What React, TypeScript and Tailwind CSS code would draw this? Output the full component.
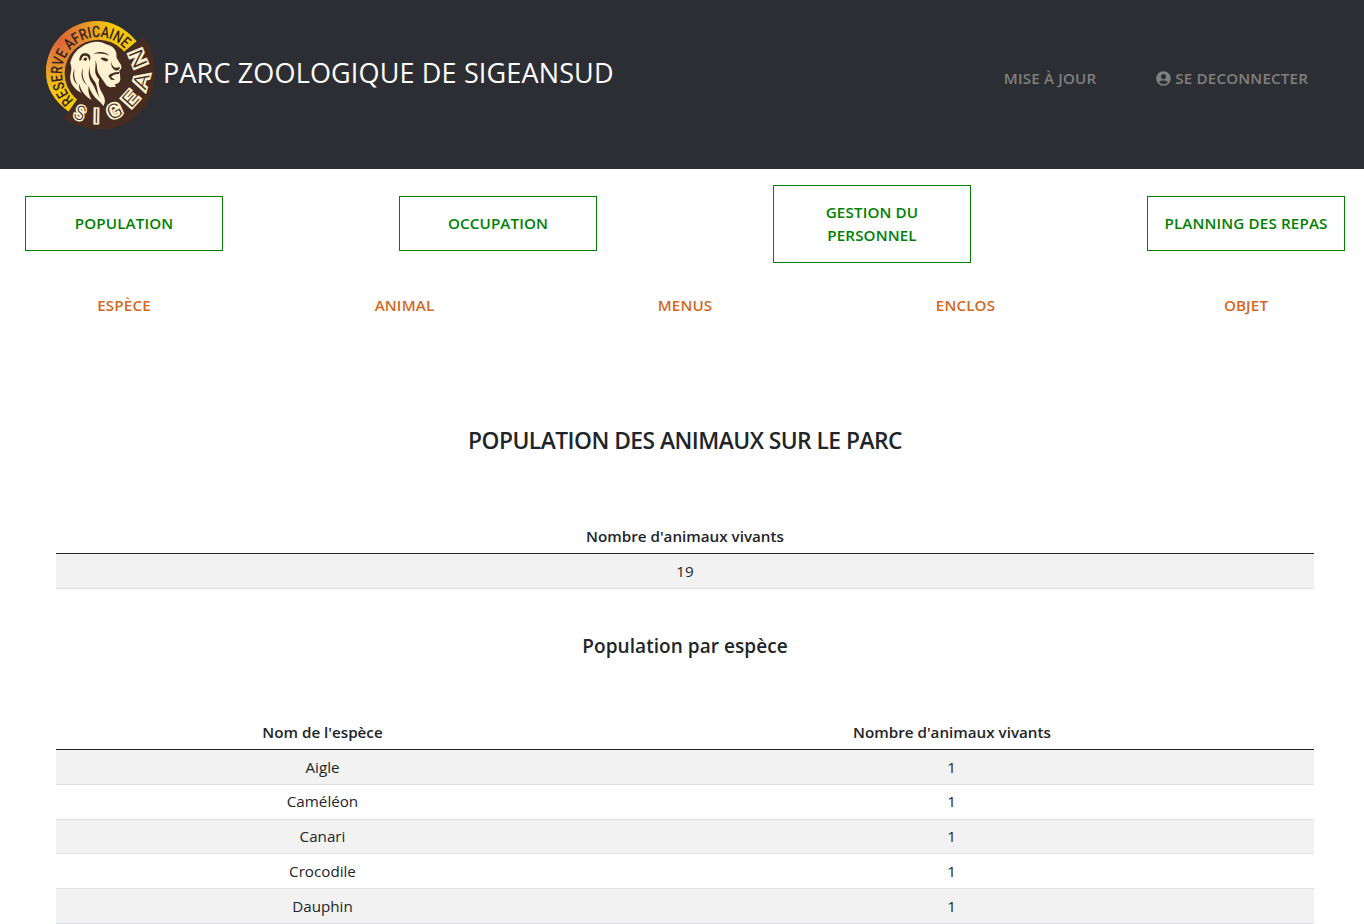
import React from "react";
import { FaUserCircle } from "react-icons/fa";

const sections = ["POPULATION", "OCCUPATION", "GESTION DU PERSONNEL", "PLANNING DES REPAS"];
const links = ["ESPÈCE", "ANIMAL", "MENUS", "ENCLOS", "OBJET"];
const species: [string, number][] = [
  ["Aigle", 1],
  ["Caméléon", 1],
  ["Canari", 1],
  ["Crocodile", 1],
  ["Dauphin", 1],
];
const letters: [string, number, number, number, number][] = [
  ["S", 132, 309, 22, 0.85],
  ["I", 181, 318, 1, 1.05],
  ["G", 235, 303, -26, 1.1],
  ["E", 283, 267, -48, 1.25],
  ["A", 315, 213, -74, 1.3],
  ["N", 306, 146, -112, 1.3],
];

function Logo() {
  return (
    <svg viewBox="0 0 390 390" className="h-[130px] w-[130px] shrink-0" aria-label="Sigean">
      <defs>
        <radialGradient id="glow" gradientUnits="userSpaceOnUse" cx="72" cy="88" r="155">
          <stop offset="0" stopColor="#dc6439" />
          <stop offset="0.45" stopColor="#e58a31" />
          <stop offset="1" stopColor="#f3c80f" />
        </radialGradient>
        <path id="motto" d="M114 270 A108 108 0 0 1 78 189 A108 108 0 0 1 186 81 A108 108 0 0 1 268 119" />
      </defs>
      <path d="M103 309 C55 275 30 235 30 187 C30 100 100 33 183 33 C228 33 270 55 302 94 L187 190 Z" fill="url(#glow)" />
      <circle cx="187" cy="190" r="101" fill="#452b20" />
      <path d="M322 81 C352 112 362 165 355 215 C344 300 275 358 197 358 C155 358 115 345 84 324 L128 262 L250 140 Z" fill="#452b20" />
      <path d="M302 94 L262 130 L236 108 L187 150 L260 60 Z" fill="none" />
      <text fontFamily="Roboto, sans-serif" fontWeight="500" fontSize="47" fill="#35231d">
        <textPath href="#motto" textLength="350" lengthAdjust="spacingAndGlyphs">
          RESERVE AFRICAINE
        </textPath>
      </text>
      <path
        d="M103 160 C108 128 140 99 176 96 C190 94 202 98 210 103 C226 106 238 116 241 130 L242 144 L255 165 C258 172 256 178 250 181 L252 192 L253 209 C250 219 244 223 236 222 L240 230 L222 232 C208 227 202 214 190 207 C185 222 191 236 199 250 C207 264 210 276 202 288 C192 272 180 268 171 254 C164 244 161 236 158 227 C155 243 160 256 167 270 C146 258 134 240 130 221 C128 230 130 240 136 249 C113 236 99 216 103 194 C106 182 108 172 103 160 Z"
        fill="#fff2d1"
      />
      <g fill="#452b20">
        <path d="M130 152 C130 135 138 127 152 130 C164 133 166 143 160 154 C159 145 156 138 149 137 C141 136 137 142 136 151 Z" />
        <path d="M142 150 C143 143 149 140 154 146 L150 153 Z" />
        <path d="M172 132 C190 122 210 126 220 137 C207 131 192 129 172 132 Z" />
        <path d="M193 145 C201 142 210 144 217 149 L213 154 C206 155 200 151 193 145 Z" />
        <path d="M226 152 C226 163 231 170 237 173 L252 172 C251 180 245 183 237 181 C228 176 224 166 226 152 Z" />
        <path d="M217 198 C226 186 240 187 251 185 L249 192 C240 191 230 195 225 201 L238 210 L225 209 Z" />
        <path d="M178 150 C186 168 180 180 190 194 C196 206 206 215 212 228 C200 214 184 208 179 192 C175 178 181 166 178 150 Z" />
        <path d="M162 168 C158 188 166 202 177 216 C185 230 184 250 192 266 C181 250 178 234 168 220 C158 206 155 188 162 168 Z" />
        <path d="M142 172 C136 194 142 212 155 228 C140 216 130 196 142 172 Z" />
        <path d="M116 176 C112 196 116 210 126 226 C112 214 106 196 116 176 Z" />
      </g>
      {letters.map(([letter, x, y, angle, stretch]) => (
        <g key={letter} transform={`translate(${x} ${y}) rotate(${angle}) scale(${stretch} 1)`} fontFamily="Roboto, sans-serif" fontSize="60" textAnchor="middle">
          <text y="21" fontWeight="500" fill="#fff2d1" stroke="#fff2d1" strokeWidth="9" strokeLinejoin="miter">{letter}</text>
          <text y="21" fontWeight="300" fill="#452b20">{letter}</text>
        </g>
      ))}
    </svg>
  );
}

export default function App() {
  return (
    <div className="h-[924px] w-[1364px] overflow-hidden bg-white font-['Open_Sans',sans-serif] text-[15.2px] leading-[22.8px] text-[#212529]">
      <header className="flex h-[169px] items-start bg-[#2d2e33] pt-[10px] pl-[36px] text-white">
        <Logo />
        <h1 className="-ml-[3px] pt-[43px] text-[27px] leading-[40px] tracking-[0.15px] whitespace-nowrap">PARC ZOOLOGIQUE DE SIGEANSUD</h1>
        <nav className="mr-[56px] ml-auto flex gap-[60px] pt-[57px] font-semibold tracking-[0.15px] text-[#808080]">
          <a>MISE À JOUR</a>
          <a className="flex items-center gap-1"><FaUserCircle className="h-[15px] w-[15px]" />SE DECONNECTER</a>
        </nav>
      </header>
      <nav className="flex h-[109px] items-center justify-between pr-[19px] pl-[25px] text-center leading-[23px] font-semibold tracking-[0.13px] text-[#008000]">
        {sections.map((s) => (
          <a key={s} className="w-[198px] border border-[#008000] px-[15px] py-[15px]">{s}</a>
        ))}
      </nav>
      <nav className="flex h-[54px] items-center justify-between pr-[19px] pl-[25px] text-center font-semibold tracking-[0.13px] text-[#d2691e]">
        {links.map((l) => <a key={l} className="w-[198px]">{l}</a>)}
      </nav>
      <main className="pr-[50px] pl-[56px] text-center">
        <h2 className="pt-[95px] text-[22.8px] leading-[28px] font-semibold tracking-[-0.53px]">POPULATION DES ANIMAUX SUR LE PARC</h2>
        <table className="mt-[64px] w-full table-fixed border-collapse">
          <thead><tr className="h-[34px] border-b border-[#212529]"><th className="pt-[2px] font-semibold">Nombre d'animaux vivants</th></tr></thead>
          <tbody><tr className="h-[35px] border-b border-[#dee2e6] bg-[#f2f2f2]"><td className="pt-px">19</td></tr></tbody>
        </table>
        <h3 className="pt-[45px] text-[19px] leading-[24px] font-semibold tracking-[0.05px]">Population par espèce</h3>
        <table className="mt-[57px] w-full table-fixed border-collapse">
          <thead><tr className="h-[35px] border-b border-[#212529]"><th className="pt-px pr-[96px] font-semibold">Nom de l'espèce</th><th className="pt-px pr-[95px] font-semibold">Nombre d'animaux vivants</th></tr></thead>
          <tbody>
            {species.map(([name, count]) => (
              <tr key={name} className="h-[34.8px] border-b border-[#dee2e6] odd:bg-[#f2f2f2]"><td className="pr-[96px]">{name}</td><td className="pr-[96px]">{count}</td></tr>
            ))}
          </tbody>
        </table>
      </main>
    </div>
  );
}
